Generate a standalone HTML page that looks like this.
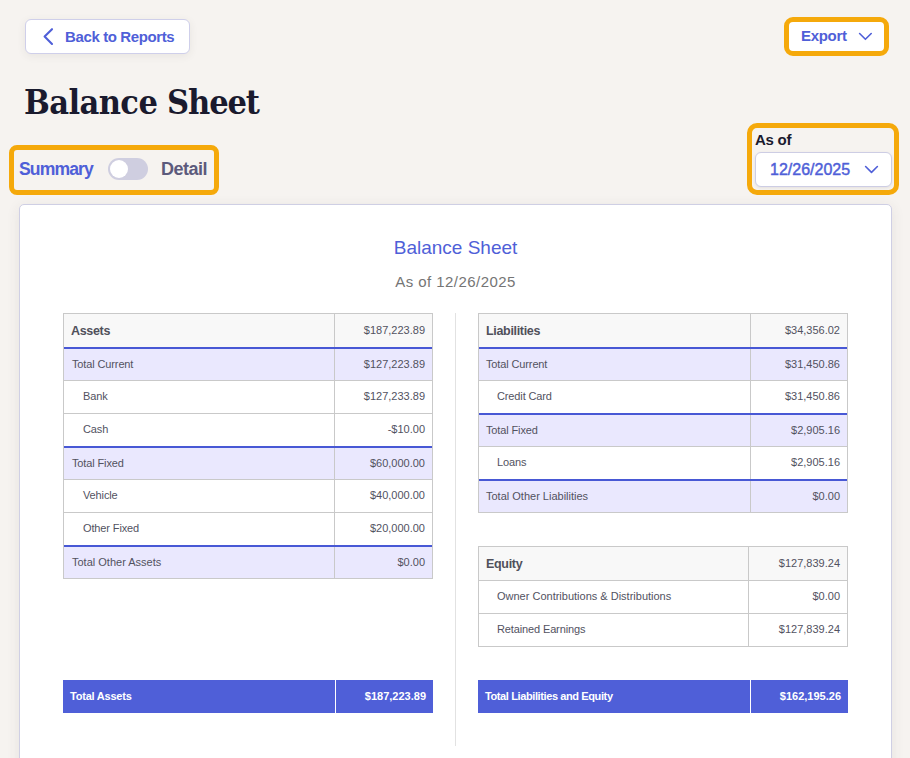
<!DOCTYPE html>
<html lang="en">
<head>
<meta charset="utf-8">
<title>Balance Sheet</title>
<style>
*{box-sizing:border-box;margin:0;padding:0}
html,body{width:910px;height:758px;overflow:hidden}
body{background:#f6f3f0;font-family:"Liberation Sans",sans-serif;position:relative;color:#1a1a2e}
.abs{position:absolute}
.btn{position:absolute;background:#fff;border:1px solid #cfcfea;border-radius:6px;color:#4f5fd8;font-weight:bold;font-size:15px;display:flex;align-items:center;white-space:nowrap}
#back{left:25px;top:19px;width:165px;height:35px;box-shadow:0 2px 8px rgba(70,60,50,.08)}
#back svg{position:absolute;left:15px;top:7px}
#back span{position:absolute;left:39px;top:8px;line-height:18px;letter-spacing:-0.38px}
h1{position:absolute;left:24px;top:78px;font-family:"DejaVu Serif Condensed","DejaVu Serif","Liberation Serif",serif;font-weight:bold;font-size:34px;line-height:48px;color:#1a1a2e;white-space:nowrap;letter-spacing:-0.9px}
.focus{position:absolute;border:5px solid #f5a90b;border-radius:9px}
#export{border-radius:9px;left:784px;top:17px;width:105px;height:39px;background:#fff}
#export span{position:absolute;left:12px;top:5px;letter-spacing:-0.3px;line-height:18px;font-size:15px;font-weight:bold;color:#4f5fd8}
#export svg{position:absolute;left:68px;top:10px}
#tog{border-radius:8px;left:9px;top:145px;width:210px;height:50px}
#tog .s{position:absolute;left:5px;top:8px;letter-spacing:-0.9px;font-size:17.6px;line-height:22px;font-weight:bold;color:#4f5fd8}
#tog .d{position:absolute;left:147px;top:8px;letter-spacing:-0.5px;font-size:18px;line-height:22px;font-weight:bold;color:#5c5a7c}
#tog .track{position:absolute;left:94px;top:8px;width:40px;height:22px;border-radius:11px;background:#cfcee0}
#tog .knob{position:absolute;left:2px;top:2px;width:18px;height:18px;border-radius:50%;background:#fff}
#asof{border-radius:10px;left:747px;top:123px;width:152px;height:72px}
#asof .lbl{position:absolute;left:3px;top:3px;letter-spacing:-0.25px;font-size:15px;line-height:18px;font-weight:bold;color:#1a1a2e}
#asof .sel{position:absolute;left:3px;top:24px;width:137px;height:35px;background:#fff;border:1px solid #cdcde4;border-radius:6px;box-shadow:0 1px 3px rgba(70,60,50,.10)}
#asof .sel span{position:absolute;left:14px;top:7px;font-size:16px;line-height:20px;color:#4f5fd8;font-weight:normal;-webkit-text-stroke:.45px #4f5fd8}
#asof .sel svg{position:absolute;left:108px;top:12px}
#card{position:absolute;left:19px;top:204px;width:873px;height:570px;background:#fff;border:1px solid #cfcfe4;border-radius:5px;box-shadow:0 3px 14px rgba(70,60,50,.09)}
#card h2{position:absolute;left:0;width:100%;top:30px;text-align:center;font-weight:normal;font-size:19px;line-height:26px;color:#4f5fd8}
#card .sub{position:absolute;left:0;width:100%;top:67px;text-align:center;letter-spacing:.45px;font-size:15px;line-height:20px;color:#757575}
#vline{position:absolute;left:455px;top:313px;width:1px;height:433px;background:#e2e2e2}
.tbl{position:absolute;width:370px;border:1px solid #c9c9c9;border-top:none;font-size:11px;color:#52525f}
.row{position:relative;height:33px;border-top:1px solid #c9c9c9;background:#fff}
.row.h{height:34px;background:#f8f8f8}
.row.t{background:#eae8fe;border-top:2px solid #4858d5}
.row .l{position:absolute;left:8px;top:-1px;bottom:1px;letter-spacing:-0.13px;display:flex;align-items:center;white-space:nowrap}
.row.c .l{left:19px}
.rt .row.t .l{left:7px}
.rt .row.c .l{left:18px}
.row .r{position:absolute;right:7px;top:-1px;bottom:1px;display:flex;align-items:center;white-space:nowrap}
.row .v{position:absolute;top:0;bottom:0;width:1px;background:#c9c9c9}
.row.h .l{font-size:12.5px;font-weight:bold;color:#50505b;left:7px;top:0;bottom:0;letter-spacing:-0.32px}
.bar{position:absolute;top:680px;height:33px;width:370px;background:#4f5fd8;color:#fff;font-weight:bold;font-size:11px}
.bar .l{position:absolute;left:7px;top:-1px;bottom:1px;letter-spacing:-0.22px;display:flex;align-items:center;white-space:nowrap}
.bar .r{position:absolute;right:7px;top:-1px;bottom:1px;display:flex;align-items:center;white-space:nowrap}
.bar .v{position:absolute;top:0;bottom:0;width:1px;background:#fff}
</style>
</head>
<body>
<div class="btn" id="back">
<svg width="16" height="20" viewBox="0 0 16 20" fill="none" stroke="#4f5fd8" stroke-width="2.1" stroke-linecap="round" stroke-linejoin="round"><path d="M11 2.2 L3.6 9.6 L11 17"/></svg>
<span>Back to Reports</span>
</div>
<div class="focus" id="export"><span>Export</span>
<svg width="16" height="10" viewBox="0 0 16 10" fill="none" stroke="#4f5fd8" stroke-width="1.6" stroke-linecap="round" stroke-linejoin="round"><path d="M2.6 1.5 L8.4 7.3 L14.2 1.5"/></svg>
</div>
<h1><span style="letter-spacing:-0.6px">Balance</span> <span style="letter-spacing:-1.1px">Sheet</span></h1>
<div class="focus" id="tog"><span class="s">Summary</span><div class="track"><div class="knob"></div></div><span class="d">Detail</span></div>
<div class="focus" id="asof"><span class="lbl">As of</span>
<div class="sel"><span>12/26/2025</span>
<svg width="16" height="10" viewBox="0 0 16 10" fill="none" stroke="#4f5fd8" stroke-width="1.6" stroke-linecap="round" stroke-linejoin="round"><path d="M1.6 1.5 L7.5 7.4 L13.4 1.5"/></svg>
</div></div>
<div id="card"><h2>Balance Sheet</h2><div class="sub">As of 12/26/2025</div></div>
<div id="vline"></div>

<div class="tbl" style="left:63px;top:313px">
<div class="row h"><span class="l">Assets</span><span class="r">$187,223.89</span><i class="v" style="left:270px"></i></div>
<div class="row t"><span class="l">Total Current</span><span class="r">$127,223.89</span><i class="v" style="left:270px"></i></div>
<div class="row c"><span class="l">Bank</span><span class="r">$127,233.89</span><i class="v" style="left:270px"></i></div>
<div class="row c"><span class="l">Cash</span><span class="r">-$10.00</span><i class="v" style="left:270px"></i></div>
<div class="row t"><span class="l">Total Fixed</span><span class="r">$60,000.00</span><i class="v" style="left:270px"></i></div>
<div class="row c"><span class="l">Vehicle</span><span class="r">$40,000.00</span><i class="v" style="left:270px"></i></div>
<div class="row c"><span class="l">Other Fixed</span><span class="r">$20,000.00</span><i class="v" style="left:270px"></i></div>
<div class="row t"><span class="l" style="letter-spacing:0">Total Other Assets</span><span class="r">$0.00</span><i class="v" style="left:270px"></i></div>
</div>

<div class="tbl rt" style="left:478px;top:313px">
<div class="row h"><span class="l">Liabilities</span><span class="r">$34,356.02</span><i class="v" style="left:271px"></i></div>
<div class="row t"><span class="l">Total Current</span><span class="r">$31,450.86</span><i class="v" style="left:271px"></i></div>
<div class="row c"><span class="l">Credit Card</span><span class="r">$31,450.86</span><i class="v" style="left:271px"></i></div>
<div class="row t"><span class="l">Total Fixed</span><span class="r">$2,905.16</span><i class="v" style="left:271px"></i></div>
<div class="row c"><span class="l">Loans</span><span class="r">$2,905.16</span><i class="v" style="left:271px"></i></div>
<div class="row t"><span class="l" style="letter-spacing:0">Total Other Liabilities</span><span class="r">$0.00</span><i class="v" style="left:271px"></i></div>
</div>

<div class="tbl rt" style="left:478px;top:546px">
<div class="row h"><span class="l">Equity</span><span class="r">$127,839.24</span><i class="v" style="left:269px"></i></div>
<div class="row c"><span class="l" style="letter-spacing:0">Owner Contributions &amp; Distributions</span><span class="r">$0.00</span><i class="v" style="left:269px"></i></div>
<div class="row c"><span class="l">Retained Earnings</span><span class="r">$127,839.24</span><i class="v" style="left:269px"></i></div>
</div>

<div class="bar" style="left:63px"><span class="l">Total Assets</span><span class="r">$187,223.89</span><i class="v" style="left:272px"></i></div>
<div class="bar" style="left:478px"><span class="l" style="letter-spacing:-0.39px">Total Liabilities and Equity</span><span class="r">$162,195.26</span><i class="v" style="left:272px"></i></div>
</body>
</html>
